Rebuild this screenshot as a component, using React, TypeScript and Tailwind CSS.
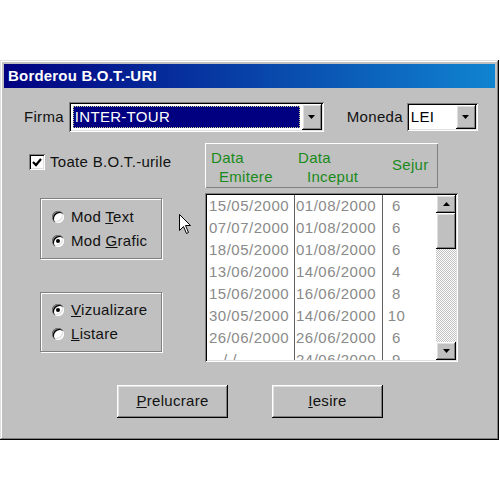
import React from "react";

const raised =
  "shadow-[inset_-1px_-1px_0_#000,inset_1px_1px_0_#fff,inset_-2px_-2px_0_#808080,inset_2px_2px_0_#dfdfdf]";
const sunken =
  "shadow-[inset_1px_1px_0_#808080,inset_-1px_-1px_0_#fff,inset_2px_2px_0_#000,inset_-2px_-2px_0_#dfdfdf]";

function Arrow({ up }: { up?: boolean }) {
  return (
    <svg width="7" height="4" viewBox="0 0 7 4">
      {up ? <path d="M3.5 0 L7 4 L0 4 Z" fill="#000" /> : <path d="M0 0 L7 0 L3.5 4 Z" fill="#000" />}
    </svg>
  );
}

function DropButton() {
  return (
    <div className={"w-[20px] h-full flex items-center justify-center bg-[#c0c0c0] " + raised}>
      <Arrow />
    </div>
  );
}

function Radio({ checked, first, rest }: { checked?: boolean; first: React.ReactNode; rest: string }) {
  return (
    <div className="h-[24px] flex items-center">
      <div className="w-[12px] h-[12px] rounded-full bg-white flex items-center justify-center shadow-[inset_1px_1px_0_#808080,inset_2px_2px_0_#000,inset_-1px_-1px_0_#fff,inset_-2px_-2px_0_#dfdfdf]">
        {checked && <div className="w-[4px] h-[4px] rounded-full bg-black" />}
      </div>
      <span className="ml-[7px] whitespace-pre">
        {first}
        {rest}
      </span>
    </div>
  );
}

const rows = [
  ["15/05/2000", "01/08/2000", "6"],
  ["07/07/2000", "01/08/2000", "6"],
  ["18/05/2000", "01/08/2000", "6"],
  ["13/06/2000", "14/06/2000", "4"],
  ["15/06/2000", "16/06/2000", "8"],
  ["30/05/2000", "14/06/2000", "10"],
  ["26/06/2000", "26/06/2000", "6"],
  ["   / /", "24/06/2000", "9"],
];

export default function App() {
  return (
    <div className="w-[500px] h-[500px] bg-white relative font-['Liberation_Sans',Arial,sans-serif] text-[15px] tracking-[0.3px] text-[#111] overflow-hidden">
      <div className="h-[60px]" />
      <div className="w-[499px] h-[380px] bg-[#c0c0c0] p-[4px] flex flex-col shadow-[inset_-1px_-1px_0_#000,inset_1px_1px_0_#dfdfdf,inset_-2px_-2px_0_#808080,inset_2px_2px_0_#fff]">
        {/* title bar */}
        <div className="h-[24px] shrink-0 flex items-center pl-[4px] text-white font-bold text-[15px] tracking-[0.2px] bg-[linear-gradient(to_right,#000080,#1084d0)]">
          Borderou B.O.T.-URI
        </div>

        {/* firma / moneda */}
        <div className="mt-[14px] h-[30px] flex items-center pl-[20px]">
          <span>Firma</span>
          <div className={"ml-[5px] w-[255px] h-full bg-white flex p-[2px] " + sunken}>
            <div className="flex-1 p-[2px]">
              <div className="h-full bg-[#000080] outline outline-1 outline-dotted outline-[#c8c890] -outline-offset-1 flex items-center pl-[2px] text-white">
                INTER-TOUR
              </div>
            </div>
            <DropButton />
          </div>
          <span className="ml-[23px]">Moneda</span>
          <div className={"ml-[4px] w-[71px] h-[28px] bg-white flex p-[2px] " + sunken}>
            <div className="flex-1 flex items-center pl-[2px] text-black">LEI</div>
            <DropButton />
          </div>
        </div>

        {/* main area */}
        <div className="mt-[11px] h-[219px] flex">
          <div className="ml-[24px] w-[177px] flex flex-col">
            <div className="mt-[11px] h-[16px] flex items-center ml-[1px]">
              <div className={"w-[16px] h-[16px] bg-white flex items-center justify-center " + sunken}>
                <svg width="10" height="9" viewBox="0 0 10 9">
                  <path d="M1 4 L4 7 L9 1" stroke="#000" strokeWidth="2.2" fill="none" />
                </svg>
              </div>
              <span className="ml-[5px]">Toate B.O.T.-urile</span>
            </div>

            <div className="mt-[28px] ml-[12px] w-[122px] h-[61px] border border-[#808080] shadow-[1px_1px_0_#fff,inset_1px_1px_0_#fff] pt-[6px] pl-[11px] flex flex-col">
              <Radio first={<>Mod <u>T</u></>} rest="ext" />
              <Radio checked first={<>Mod <u>G</u></>} rest="rafic" />
            </div>

            <div className="mt-[33px] ml-[12px] w-[122px] h-[60px] border border-[#808080] shadow-[1px_1px_0_#fff,inset_1px_1px_0_#fff] pt-[5px] pl-[11px] flex flex-col">
              <Radio checked first={<u>V</u>} rest="izualizare" />
              <Radio first={<u>L</u>} rest="istare" />
            </div>
          </div>

          <div className="flex flex-col">
            {/* header */}
            <div className="w-[233px] h-[45px] flex text-[#1a8a1a] shadow-[inset_1px_1px_0_#fff,inset_-1px_-1px_0_#808080]">
              <div className="w-[86px] pt-[5px] leading-[19px]">
                <div className="pl-[6px]">Data</div>
                <div className="pl-[14px]">Emitere</div>
              </div>
              <div className="w-[88px] pt-[5px] leading-[19px]">
                <div className="pl-[7px]">Data</div>
                <div className="pl-[16px]">Inceput</div>
              </div>
              <div className="flex items-center pl-[13px]">Sejur</div>
            </div>

            {/* list */}
            <div className={"mt-[5px] w-[253px] h-[169px] bg-white p-[2px] flex " + sunken}>
              <div className="flex-1 flex overflow-hidden text-[#8a8a8a] tracking-[0.5px] text-[15px]">
                <div className="w-[88px] border-r border-[#606060] shrink-0">
                  {rows.map((r, i) => (
                    <div key={i} className="h-[22px] leading-[21px] pl-[2px] whitespace-pre">
                      {r[0]}
                    </div>
                  ))}
                </div>
                <div className="w-[88px] border-r border-[#606060] shrink-0">
                  {rows.map((r, i) => (
                    <div key={i} className="h-[22px] leading-[21px] pl-[1px]">
                      {r[1]}
                    </div>
                  ))}
                </div>
                <div className="flex-1">
                  {rows.map((r, i) => (
                    <div key={i} className="h-[22px] leading-[21px] w-[27px] text-center">
                      {r[2]}
                    </div>
                  ))}
                </div>
              </div>
              {/* scrollbar */}
              <div className="w-[20px] flex flex-col">
                <div className={"h-[18px] flex items-center justify-center bg-[#c0c0c0] " + raised}>
                  <Arrow up />
                </div>
                <div className={"h-[36px] bg-[#c0c0c0] " + raised} />
                <div className="flex-1 bg-[repeating-conic-gradient(#c0c0c0_0%_25%,#ffffff_0%_50%)] [background-size:2px_2px]" />
                <div className={"h-[18px] flex items-center justify-center bg-[#c0c0c0] " + raised}>
                  <Arrow />
                </div>
              </div>
            </div>
          </div>
        </div>

        {/* buttons */}
        <div className="mt-[23px] flex">
          <div className={"ml-[113px] w-[111px] h-[33px] flex items-center justify-center bg-[#c0c0c0] " + raised}>
            <span>
              <u>P</u>relucrare
            </span>
          </div>
          <div className={"ml-[44px] w-[111px] h-[33px] flex items-center justify-center bg-[#c0c0c0] " + raised}>
            <span>
              <u>I</u>esire
            </span>
          </div>
        </div>
      </div>

      {/* mouse cursor */}
      <svg className="absolute left-[179px] top-[214px]" width="13" height="21" viewBox="0 0 13 21">
        <path d="M0.5 0.5 L0.5 16.5 L4.5 12.5 L7.5 19.5 L9.5 18.5 L6.5 11.5 L11.5 11.5 Z" fill="#fff" stroke="#000" strokeWidth="1" />
      </svg>
    </div>
  );
}
